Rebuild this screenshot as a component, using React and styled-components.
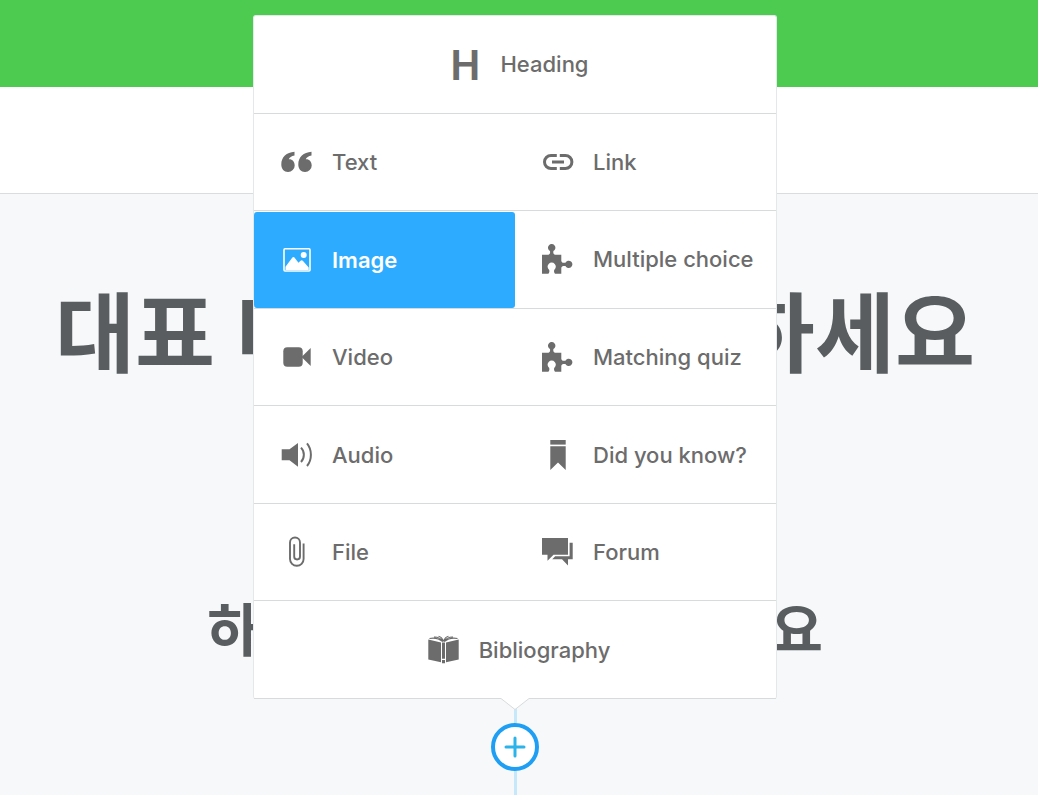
import styled, { createGlobalStyle } from "styled-components"
import { useState } from "react";

const GlobalStyle=createGlobalStyle`
* {
  box-sizing: border-box;
}
body {
  margin: 0;
  font-family: Inter, "Noto Sans CJK KR", sans-serif;
}
`
const Page=styled.div`
min-height: 100vh;
display: flex;
flex-direction: column;
overflow: hidden;
background-color: #f6f8fa;
`
const TopBar=styled.header`
height: 87px;
background-color: #4dcb51;
`
const SubBar=styled.div`
height: 107px;
background-color: white;
border-bottom: 1px solid #d9dde0;
`
const Stage=styled.main`
flex: 1;
display: flex;
flex-direction: column;
align-items: center;
padding: 74px 8px 0px 0px;
color: #5a5d5f;
font-family: "Noto Sans CJK KR", sans-serif;
white-space: nowrap;
`
const Title=styled.h1`
margin: 0;
font-size: 87px;
line-height: 120px;
font-weight: 700;
`
const Subtitle=styled.h2`
margin: 198px 0px 0px;
font-size: 57px;
line-height: 80px;
font-weight: 700;
`
const Line=styled.div`
width: 3px;
flex: ${(props) => (props.$grow ? "1" : "0 0 57px")};
background-color: #c6e8fa;
`
const Anchor=styled.div`
position: relative;
display: flex;
`
const AddButton=styled.button`
width: 48px;
height: 48px;
padding: 0;
display: flex;
align-items: center;
justify-content: center;
border: 4px solid #1f9ff3;
border-radius: 50%;
background-color: white;
color: #2bb3ea;
cursor: pointer;
`
const Popover=styled.div`
position: absolute;
bottom: calc(100% + 24px);
left: 50%;
transform: translateX(-50%);
width: 524px;
height: 684px;
display: grid;
grid-auto-rows: 1fr;
border: 1px solid #e4e8ea;
border-bottom: none;
border-radius: 3px;
background-color: white;
font-family: Inter, sans-serif;
`
const Row=styled.div`
display: flex;
border-bottom: 1px solid #d7dbdc;
`
const Item=styled.button`
flex: 1;
display: flex;
align-items: center;
justify-content: ${(props) => (props.$wide ? "center" : "flex-start")};
gap: 19px;
margin: ${(props) => (props.$active ? "1px 0px 0px" : "0px")};
padding: ${(props) => (props.$wide ? "0px 0px 0px 8px" : "0px 0px 0px 27px")};
border: none;
border-radius: 3px;
background-color: ${(props) => (props.$active ? "#2cabff" : "transparent")};
color: ${(props) => (props.$active ? "white" : "#6c6c6c")};
font-family: inherit;
font-size: 22px;
line-height: 32px;
font-weight: ${(props) => (props.$active ? "600" : "500")};
cursor: pointer;
`
const Icon=styled.svg`
width: 32px;
height: 32px;
flex: none;
fill: currentColor;
`
const Letter=styled.span`
width: 32px;
padding-top: 3px;
font-family: Roboto, sans-serif;
font-size: 42px;
font-weight: 600;
text-align: center;
`
const Arrow=styled.svg`
position: absolute;
top: calc(100% - 1px);
left: 50%;
transform: translateX(-50%);
width: 30px;
height: 13px;
`

const puzzle = (
  <path d="M0 11.7H6.5C8 11.2 8.3 10.2 8 8.1A3.7 3.7 0 1 1 11.4 8.1C11.1 10.2 11.4 11.2 12.9 11.7H19.3V18C19.8 19.7 21 20 23.4 19.7A3.7 3.7 0 1 1 23.4 23C21 22.7 19.8 23 19.3 24.7V30.7H13C12 29.5 11.8 28.3 12.2 26.9A4.1 4.1 0 1 0 7.2 26.9C7.6 28.3 7.4 29.5 6.4 30.7H0Z" />
)

const drawings = {
  text: (
    <>
      <path d="M13.5 5.7V9.5C10.5 10 8.3 11.5 7.8 13.3C11.3 13 13.7 15.8 13.7 19.4A6.6 6.6 0 0 1 7 26C3 26 .3 23 .3 18.5C.3 11 5.5 6.2 13.5 5.7Z" />
      <path d="M30.5 5.7V9.5C27.5 10 25.3 11.5 24.8 13.3C28.3 13 30.7 15.8 30.7 19.4A6.6 6.6 0 0 1 24 26C20 26 17.3 23 17.3 18.5C17.3 11 22.5 6.2 30.5 5.7Z" />
    </>
  ),
  link: (
    <path
      d="M14.8 9.5H9A6.4 6.4 0 0 0 9 22.5H14.8M17.8 9.5H23.4A6.4 6.4 0 0 1 23.4 22.5H17.8M10 16H22"
      fill="none"
      stroke="currentColor"
      strokeWidth="3"
    />
  ),
  image: (
    <>
      <rect x="3" y="4.8" width="26" height="22.2" rx="1" fill="none" stroke="currentColor" strokeWidth="1.6" />
      <path d="M4.5 26V22.8L10.8 14.2C12 12.7 13 12.7 14 14.2L17.5 18.7L19.5 16.7C20.3 16 21 16 21.8 16.8L27.7 23.5V26Z" />
      <circle cx="22.7" cy="11" r="3" />
    </>
  ),
  puzzle,
  video: (
    <>
      <rect x="2.3" y="6.3" width="19.4" height="19.4" rx="4" />
      <path d="M20.5 16L29.7 7V25Z" />
    </>
  ),
  audio: (
    <>
      <path d="M.7 10.3H8.5L17 4V27.7L8.5 21.3H.7Z" />
      <path
        d="M20 8.6C23.8 12.4 23.8 19.2 20 23M26 4.4C31.2 10.8 31.2 20.8 26 27"
        fill="none"
        stroke="currentColor"
        strokeWidth="2"
      />
    </>
  ),
  bookmark: (
    <>
      <rect x="8.3" y="1" width="15.4" height="4.6" />
      <path d="M8.3 7.2H23.7V31L16 23.4L8.3 31Z" />
    </>
  ),
  file: (
    <path
      d="M22.6 7.6V23A6.8 6.8 0 0 1 9 23V6.5A5 5 0 0 1 19 6.5V20.6A2.9 2.9 0 0 1 13.2 20.6V8.2"
      fill="none"
      stroke="currentColor"
      strokeWidth="1.9"
    />
  ),
  forum: (
    <>
      <path d="M0 2H26V18.7H11.5L5.5 24.7V18.7H0Z" />
      <path d="M27.6 6.7H30.7V23.2H26V29.4L20 23.2H10.2L13.2 20.2H27.6Z" />
    </>
  ),
  book: (
    <>
      <path d="M.3 5.4L13 8.4V28.3L.3 25.6ZM30.7 5.4L18 8.4V28.3L30.7 25.6Z" />
      <path d="M14 8.6H17V24.8H14ZM14 26H17V29.3H14Z" />
      <path
        d="M1.5 4.5C6 3.6 11 4.5 14.8 7.6M6 3C9.8 2.8 13 4.6 15.2 7.4M10.5 2.2C13 2.7 14.6 4.6 15.5 7.4M29.5 4.5C25 3.6 20 4.5 16.2 7.6M25 3C21.2 2.8 18 4.6 15.8 7.4M20.5 2.2C18 2.7 16.4 4.6 15.5 7.4"
        fill="none"
        stroke="currentColor"
        strokeWidth="1.1"
      />
    </>
  ),
}

const rows = [
  [{ label: "Heading", icon: "heading" }],
  [{ label: "Text", icon: "text" }, { label: "Link", icon: "link" }],
  [{ label: "Image", icon: "image" }, { label: "Multiple choice", icon: "puzzle" }],
  [{ label: "Video", icon: "video" }, { label: "Matching quiz", icon: "puzzle" }],
  [{ label: "Audio", icon: "audio" }, { label: "Did you know?", icon: "bookmark" }],
  [{ label: "File", icon: "file" }, { label: "Forum", icon: "forum" }],
  [{ label: "Bibliography", icon: "book" }],
]

const App = () => {
    const [open, setOpen] = useState(true);
    const [selected, setSelected] = useState("Image");

    return (
        <Page>
            <GlobalStyle/>
            <TopBar/>
            <SubBar/>
            <Stage>
                <Title>대표 미디어를 추가하세요</Title>
                <Subtitle>하위 제목을 입력해 주세요</Subtitle>
                <Line/>
                <Anchor>
                    <AddButton aria-label="Add block" aria-expanded={open} onClick={() => setOpen(!open)}>
                        <svg width="22" height="22" viewBox="0 0 22 22" stroke="currentColor" strokeWidth="3" strokeLinecap="round">
                            <path d="M11 2V20M2 11H20" />
                        </svg>
                    </AddButton>
                    {open && (
                        <Popover>
                            {rows.map((items) => (
                                <Row key={items[0].label}>
                                    {items.map((item) => (
                                        <Item
                                            key={item.label}
                                            $wide={items.length === 1}
                                            $active={item.label === selected}
                                            onClick={() => setSelected(item.label)}
                                        >
                                            {item.icon === "heading"
                                                ? <Letter aria-hidden="true">H</Letter>
                                                : <Icon viewBox="0 0 32 32" aria-hidden="true">{drawings[item.icon]}</Icon>}
                                            {item.label}
                                        </Item>
                                    ))}
                                </Row>
                            ))}
                            <Arrow viewBox="0 0 30 13">
                                <path d="M0 0H30L15 11.5Z" fill="white" />
                                <path d="M0 .5H1L15 11.5L29 .5H30" fill="none" stroke="#d7dbdc" />
                            </Arrow>
                        </Popover>
                    )}
                </Anchor>
                <Line $grow/>
            </Stage>
        </Page>
    )
}

export default App
